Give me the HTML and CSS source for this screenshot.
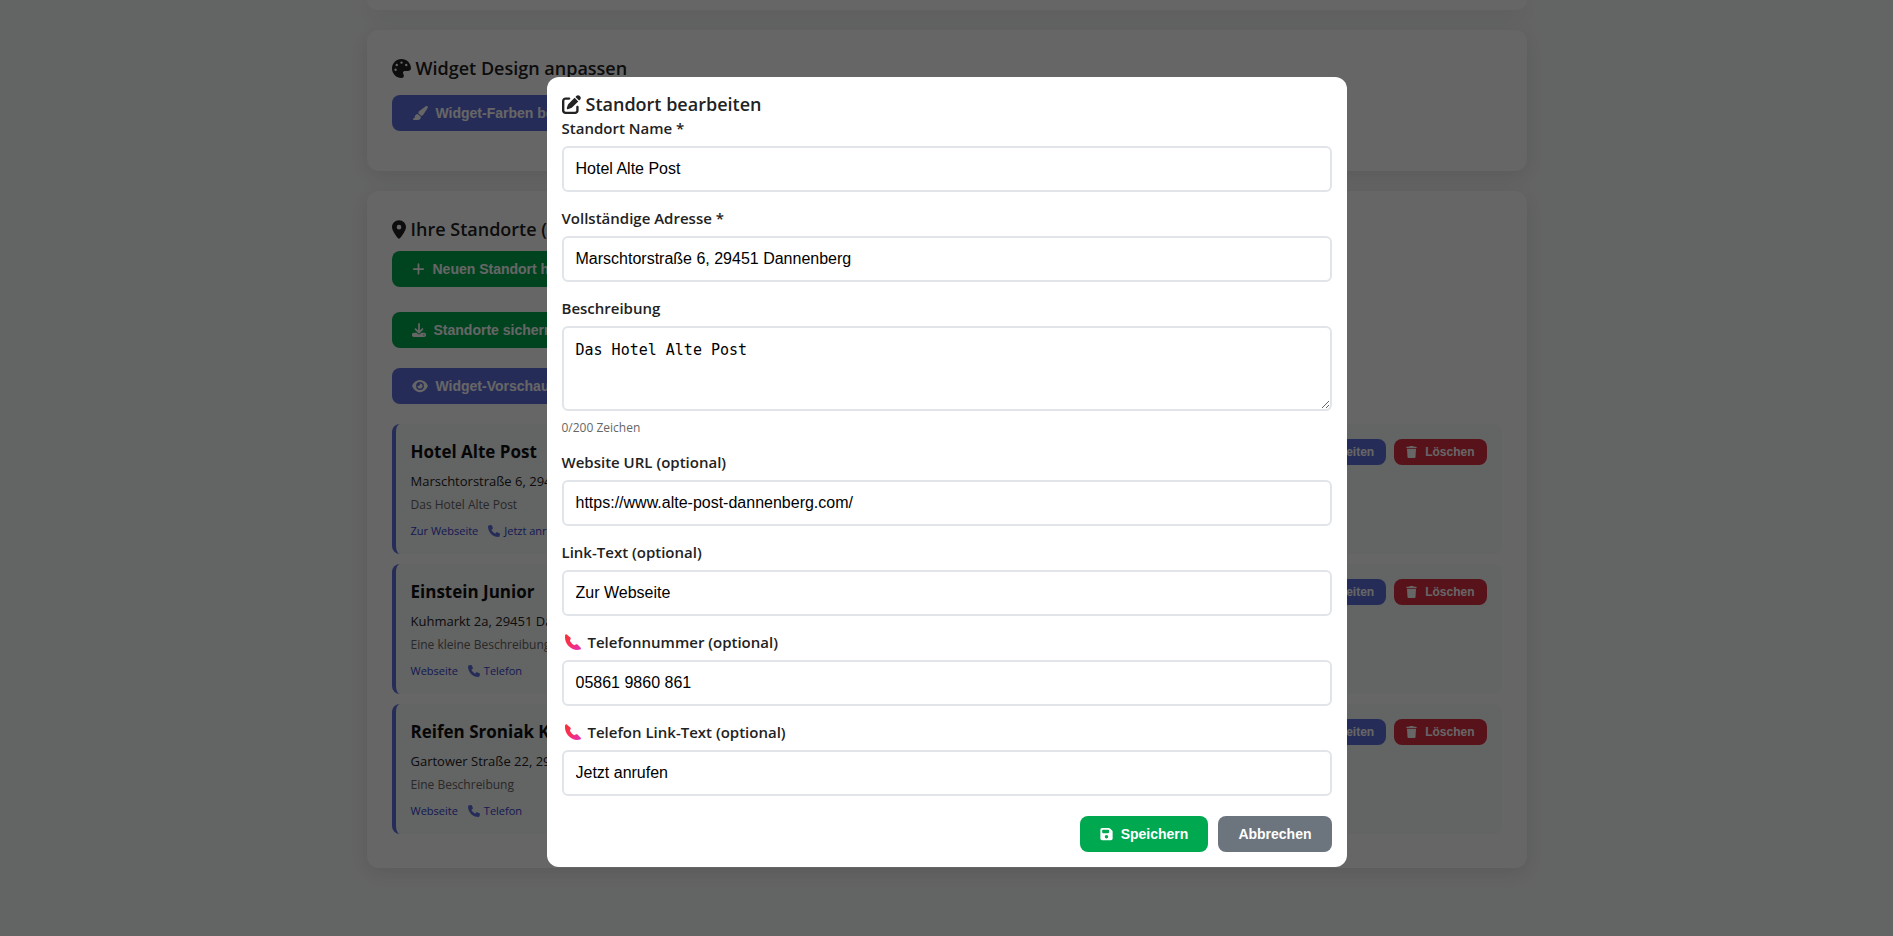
FILE: index.html
```
<!DOCTYPE html>
<html lang="de">
<head>
  <meta charset="UTF-8">
  <meta name="viewport" content="width=device-width, initial-scale=1.0">
  <title>Standorte verwalten</title>
  <link rel="stylesheet" href="styles.css">
</head>
<body>
  <!-- Icons -->
  <svg class="icon-defs" aria-hidden="true">
    <defs>
      <linearGradient id="pink" x1="0" y1="0" x2="1" y2="1">
        <stop offset="0" stop-color="#f8312f"/>
        <stop offset="0.5" stop-color="#f92f60"/>
        <stop offset="1" stop-color="#e02fc0"/>
      </linearGradient>
    </defs>
    <symbol id="i-palette" viewBox="0 0 512 512"><path fill-rule="evenodd" d="M512 256c0 .9 0 1.800 0 2.700c-.4 36.500-33.600 61.300-70.100 61.300H344c-26.500 0-48 21.500-48 48c0 3.400 .4 6.700 1 9.900c2.100 10.200 6.500 20 10.800 29.900c6.100 13.800 12.100 27.500 12.100 42c0 31.800-21.600 60.700-53.400 62c-3.500 .1-7 .2-10.600 .2C114.600 512 0 397.400 0 256S114.600 0 256 0S512 114.600 512 256zM128 288a32 32 0 1 0-64 0a32 32 0 1 0 64 0zm0-96a32 32 0 1 0 0-64a32 32 0 1 0 0 64zM288 96a32 32 0 1 0-64 0a32 32 0 1 0 64 0zm96 96a32 32 0 1 0 0-64a32 32 0 1 0 0 64z"/></symbol>
    <symbol id="i-brush" viewBox="0 0 576 512"><path d="M339.300 367.100c27.300-3.900 51.900-19.400 67.200-42.900L568.200 74.100c12.600-19.500 9.400-45.300-7.600-61.200S517.700-4.400 499.100 9.600L262.400 187.200c-24 18-38.200 46.100-38.400 76.100l115.300 103.800zm-19.600 25.400l-116-104.400C143.900 290.300 96 339.600 96 400c0 3.900 .2 7.800 .6 11.600C98.400 429.100 86.400 448 68.800 448H64c-17.700 0-32 14.300-32 32s14.300 32 32 32H208c61.900 0 112-50.100 112-112c0-2.500-.1-5-.2-7.500z"/></symbol>
    <symbol id="i-pin" viewBox="0 0 384 512"><path fill-rule="evenodd" d="M215.700 499.200C267 435 384 279.400 384 192C384 86 298 0 192 0S0 86 0 192c0 87.400 117 243 168.300 307.200c12.300 15.300 35.100 15.300 47.400 0zM192 128a64 64 0 1 1 0 128a64 64 0 1 1 0-128z"/></symbol>
    <symbol id="i-plus" viewBox="0 0 448 512"><path d="M256 80c0-17.700-14.300-32-32-32s-32 14.300-32 32V224H48c-17.700 0-32 14.300-32 32s14.300 32 32 32H192V432c0 17.700 14.300 32 32 32s32-14.300 32-32V288H400c17.700 0 32-14.300 32-32s-14.300-32-32-32H256V80z"/></symbol>
    <symbol id="i-download" viewBox="0 0 512 512"><path fill-rule="evenodd" d="M288 32c0-17.700-14.300-32-32-32s-32 14.300-32 32V274.700l-73.400-73.400c-12.500-12.500-32.800-12.500-45.300 0s-12.500 32.800 0 45.300l128 128c12.500 12.500 32.800 12.500 45.300 0l128-128c12.500-12.500 12.500-32.800 0-45.300s-32.800-12.500-45.300 0L288 274.700V32zM64 352c-35.300 0-64 28.700-64 64v32c0 35.300 28.700 64 64 64H448c35.300 0 64-28.700 64-64V416c0-35.300-28.700-64-64-64H346.500l-45.300 45.300c-25 25-65.500 25-90.500 0L165.500 352H64zm368 56a24 24 0 1 1 0 48a24 24 0 1 1 0-48z"/></symbol>
    <symbol id="i-eye" viewBox="0 0 576 512"><path fill-rule="evenodd" d="M288 32c-80.800 0-145.500 36.800-192.600 80.600C48.600 156 17.300 208 2.500 243.700c-3.300 7.900-3.300 16.700 0 24.600C17.300 304 48.600 356 95.400 399.400C142.500 443.200 207.200 480 288 480s145.500-36.800 192.600-80.600c46.800-43.500 78.100-95.400 93-131.100c3.300-7.900 3.300-16.700 0-24.600c-14.900-35.700-46.200-87.700-93-131.100C433.500 68.800 368.800 32 288 32zM144 256a144 144 0 1 1 288 0a144 144 0 1 1-288 0zm144-64c0 35.300-28.700 64-64 64c-7.100 0-13.900-1.200-20.300-3.300c-5.500-1.800-11.900 1.600-11.700 7.400c.3 6.900 1.300 13.800 3.200 20.700c13.700 51.200 66.400 81.600 117.600 67.900s81.600-66.400 67.900-117.600c-11.100-41.500-47.800-69.400-88.600-71.100c-5.800-.2-9.200 6.100-7.400 11.700c2.100 6.400 3.300 13.200 3.300 20.300z"/></symbol>
    <symbol id="i-phone" viewBox="0 0 512 512"><path d="M164.900 24.600c-7.700-18.600-28-28.500-47.400-23.200l-88 24C12.100 30.200 0 46 0 64C0 311.400 200.600 512 448 512c18 0 33.800-12.100 38.600-29.500l24-88c5.300-19.400-4.600-39.700-23.200-47.400l-96-40c-16.300-6.800-35.200-2.100-46.300 11.600L304.700 368C234.300 334.700 177.300 277.700 144 207.300L193.300 167c13.700-11.200 18.400-30 11.600-46.300l-40-96z"/></symbol>
    <symbol id="i-edit" viewBox="0 0 512 512"><path d="M471.600 21.700c-21.900-21.900-57.300-21.900-79.200 0L362.300 51.700l97.900 97.900 30.100-30.100c21.900-21.900 21.900-57.300 0-79.200L471.600 21.700zm-299.200 220c-6.100 6.100-10.800 13.600-13.500 21.900l-29.600 88.800c-2.900 8.600-.6 18.100 5.800 24.600s15.900 8.700 24.600 5.800l88.800-29.600c8.200-2.700 15.700-7.400 21.900-13.500L437.700 172.300 339.700 74.300 172.400 241.700zM96 64C43 64 0 107 0 160V416c0 53 43 96 96 96H352c53 0 96-43 96-96V320c0-17.700-14.300-32-32-32s-32 14.300-32 32v96c0 17.700-14.300 32-32 32H96c-17.700 0-32-14.300-32-32V160c0-17.700 14.300-32 32-32h96c17.700 0 32-14.300 32-32s-14.300-32-32-32H96z"/></symbol>
    <symbol id="i-trash" viewBox="0 0 448 512"><path d="M135.200 17.700L128 32H32C14.300 32 0 46.300 0 64S14.300 96 32 96H416c17.700 0 32-14.300 32-32s-14.300-32-32-32H320l-7.200-14.300C307.400 6.800 296.300 0 284.200 0H163.800c-12.100 0-23.200 6.800-28.600 17.700zM416 128H32L53.200 467c1.600 25.300 22.600 45 47.900 45H346.900c25.300 0 46.300-19.700 47.900-45L416 128z"/></symbol>
    <symbol id="i-save" viewBox="0 0 448 512"><path fill-rule="evenodd" d="M64 32C28.700 32 0 60.700 0 96V416c0 35.300 28.700 64 64 64H384c35.300 0 64-28.700 64-64V173.300c0-17-6.700-33.300-18.700-45.300L352 50.700C340 38.700 323.700 32 306.700 32H64zm0 96c0-17.700 14.300-32 32-32H288c17.700 0 32 14.300 32 32v64c0 17.700-14.300 32-32 32H96c-17.700 0-32-14.300-32-32V128zM224 288a64 64 0 1 1 0 128a64 64 0 1 1 0-128z"/></symbol>
    <symbol id="i-receiver" viewBox="0 0 16 16"><path fill="url(#pink)" d="M.2 1C.4.300 1.200 0 1.800.4L5.300 3.600C5.900 4.200 5.900 4.900 5.400 5.500L4.900 6.500C5.200 8 8 10.800 9.500 11.200L10.600 10.600C11.200 10.100 11.900 10.100 12.500 10.600L15.700 13.700C16.200 14.400 15.900 15.200 15.100 15.500C11.500 16.600 7 15.600 3.800 12.300C.6 9-.5 4.800 .2 1Z"/></symbol>
  </svg>

  <div class="container">
    <div class="card card-prev"></div>

    <div class="card">
      <h2><svg class="icon"><use href="#i-palette"/></svg> Widget Design anpassen</h2>
      <div class="btn-row">
        <button class="btn btn-primary"><svg class="icon wide"><use href="#i-brush"/></svg>Widget-Farben bearbeiten</button>
      </div>
    </div>

    <div class="card">
      <h2 class="tight"><svg class="icon narrow"><use href="#i-pin"/></svg> Ihre Standorte (3)</h2>
      <div class="btn-row first">
        <button class="btn btn-success"><svg class="icon narrow"><use href="#i-plus"/></svg>Neuen Standort hinzufügen</button>
      </div>
      <div class="btn-row spaced">
        <button class="btn btn-success"><svg class="icon"><use href="#i-download"/></svg>Standorte sichern</button>
      </div>
      <div class="btn-row spaced">
        <button class="btn btn-primary"><svg class="icon wide"><use href="#i-eye"/></svg>Widget-Vorschau</button>
      </div>

      <div class="locations">
        <div class="location">
          <div class="location-info">
            <h3>Hotel Alte Post</h3>
            <p class="address">Marschtorstraße 6, 29451 Dannenberg</p>
            <p class="description">Das Hotel Alte Post</p>
            <div class="links">
              <a href="#">Zur Webseite</a>
              <a href="#"><svg class="icon"><use href="#i-phone"/></svg> Jetzt anrufen</a>
            </div>
          </div>
          <div class="actions">
            <button class="btn btn-small btn-primary"><svg class="icon"><use href="#i-edit"/></svg>Bearbeiten</button>
            <button class="btn btn-small btn-danger"><svg class="icon narrow"><use href="#i-trash"/></svg>Löschen</button>
          </div>
        </div>

        <div class="location">
          <div class="location-info">
            <h3>Einstein Junior</h3>
            <p class="address">Kuhmarkt 2a, 29451 Dannenberg</p>
            <p class="description">Eine kleine Beschreibung</p>
            <div class="links">
              <a href="#">Webseite</a>
              <a href="#"><svg class="icon"><use href="#i-phone"/></svg> Telefon</a>
            </div>
          </div>
          <div class="actions">
            <button class="btn btn-small btn-primary"><svg class="icon"><use href="#i-edit"/></svg>Bearbeiten</button>
            <button class="btn btn-small btn-danger"><svg class="icon narrow"><use href="#i-trash"/></svg>Löschen</button>
          </div>
        </div>

        <div class="location">
          <div class="location-info">
            <h3>Reifen Sroniak KG</h3>
            <p class="address">Gartower Straße 22, 29451 Dannenberg</p>
            <p class="description">Eine Beschreibung</p>
            <div class="links">
              <a href="#">Webseite</a>
              <a href="#"><svg class="icon"><use href="#i-phone"/></svg> Telefon</a>
            </div>
          </div>
          <div class="actions">
            <button class="btn btn-small btn-primary"><svg class="icon"><use href="#i-edit"/></svg>Bearbeiten</button>
            <button class="btn btn-small btn-danger"><svg class="icon narrow"><use href="#i-trash"/></svg>Löschen</button>
          </div>
        </div>
      </div>
    </div>
  </div>

  <div class="modal-overlay">
    <form class="modal" role="dialog" aria-labelledby="modalTitle">
      <h2 id="modalTitle"><svg class="icon"><use href="#i-edit"/></svg> Standort bearbeiten</h2>
      <div class="form-group">
        <label for="name">Standort Name *</label>
        <input type="text" id="name" value="Hotel Alte Post">
      </div>
      <div class="form-group">
        <label for="address">Vollständige Adresse *</label>
        <input type="text" id="address" value="Marschtorstraße 6, 29451 Dannenberg">
      </div>
      <div class="form-group">
        <label for="description">Beschreibung</label>
        <textarea id="description" maxlength="200">Das Hotel Alte Post</textarea>
        <div class="char-count">0/200 Zeichen</div>
      </div>
      <div class="form-group">
        <label for="website">Website URL (optional)</label>
        <input type="text" id="website" value="https://www.alte-post-dannenberg.com/">
      </div>
      <div class="form-group">
        <label for="linkText">Link-Text (optional)</label>
        <input type="text" id="linkText" value="Zur Webseite">
      </div>
      <div class="form-group">
        <label for="phone"><svg class="receiver"><use href="#i-receiver"/></svg>Telefonnummer (optional)</label>
        <input type="text" id="phone" value="05861 9860 861">
      </div>
      <div class="form-group">
        <label for="phoneText"><svg class="receiver"><use href="#i-receiver"/></svg>Telefon Link-Text (optional)</label>
        <input type="text" id="phoneText" value="Jetzt anrufen">
      </div>
      <div class="modal-actions">
        <button type="button" class="btn btn-success"><svg class="icon narrow"><use href="#i-save"/></svg>Speichern</button>
        <button type="button" class="btn btn-secondary">Abbrechen</button>
      </div>
    </form>
  </div>
</body>
</html>
```
FILE: styles.css
```
:root {
  --primary: #5f6fdc;
  --success: #00a84f;
  --danger: #dc2d42;
  --secondary: #6c757d;
  --text: #222;
  --light: #f8faf9;
  --border: #e1e5e9;
}
* { margin: 0; padding: 0; box-sizing: border-box; }
body {
  font-family: "Segoe UI", "Open Sans", sans-serif;
  background: var(--light);
  color: var(--text);
  overflow: hidden;
}
.icon-defs { position: absolute; width: 0; height: 0; }
.icon { width: 14px; height: 14px; fill: currentColor; flex: none; }
.icon.wide { width: 16px; }
.icon.narrow { width: 13px; }

.container { max-width: 1160px; margin: 0 auto; }
.card {
  background: white;
  border-radius: 12px;
  padding: 25px;
  margin-bottom: 20px;
  box-shadow: 0 5px 20px rgba(0,0,0,0.1);
}
.card-prev { height: 10px; padding: 0; border-radius: 0 0 12px 12px; }

h2 { display: flex; align-items: center; gap: 5px; font-size: 18px; font-weight: 600; line-height: 26px; }
h2 .icon { width: 19px; height: 19px; }
h2 .icon.narrow { width: 14px; }
.card h2 { margin-bottom: 14px; }
.card h2.tight { margin-bottom: 9px; }

.btn {
  display: inline-flex; align-items: center; gap: 8px;
  height: 36px; padding: 0 20px;
  border: none; border-radius: 8px;
  font-family: "Liberation Sans", Arial, sans-serif;
  font-size: 14px; font-weight: 700;
  color: white; cursor: pointer;
}
.btn-primary { background: var(--primary); }
.btn-success { background: var(--success); }
.btn-danger { background: var(--danger); }
.btn-secondary { background: var(--secondary); }
.btn-small { height: 26px; padding: 0 12px; font-size: 12px; }
.btn-small .icon { width: 12px; height: 12px; }
.btn-small .icon.narrow { width: 11px; }
.btn-row { display: flex; margin-bottom: 15px; }
.btn-row.first { margin-bottom: 25px; }
.btn-row.spaced { margin-bottom: 20px; }

/* Location list */
.locations { display: flex; flex-direction: column; gap: 10px; margin-bottom: 9px; }
.location {
  display: flex; justify-content: space-between; align-items: flex-start;
  padding: 15px;
  background: var(--light);
  border-left: 4px solid var(--primary);
  border-radius: 8px;
}
.location h3 { font-size: 17px; line-height: 26px; margin-bottom: 4px; color: #111; }
.address { font-size: 13px; line-height: 24px; }
.description { font-size: 12px; line-height: 24px; color: #666; }
.links { display: flex; gap: 10px; margin-top: 6px; font-size: 11px; line-height: 16px; }
.links a { display: flex; align-items: center; gap: 4px; color: #3540d0; text-decoration: none; }
.links .icon { width: 12px; height: 12px; fill: var(--primary); }
.actions { display: flex; gap: 8px; }

/* Modal */
.modal-overlay {
  position: fixed; inset: 0;
  display: flex; justify-content: center; align-items: flex-start;
  padding-top: 77px;
  background: rgba(0,0,0,0.6);
}
.modal { width: 100%; max-width: 800px; padding: 16px 15px 15px; background: white; border-radius: 12px; }
.modal h2 { line-height: 23px; }
.form-group { margin-bottom: 14px; }
label { display: flex; align-items: center; margin-bottom: 6px; font-size: 15px; font-weight: 600; line-height: 24px; }
.receiver { width: 16px; height: 16px; margin: 0 7px 0 3px; }
input, textarea {
  display: block; width: 100%; height: 46px;
  padding: 12px;
  border: 2px solid var(--border); border-radius: 6px;
  font-family: "Liberation Sans", Arial, sans-serif; font-size: 16px;
  color: black; background: white;
}
textarea { height: 85px; padding-top: 13px; font-family: Consolas, "DejaVu Sans Mono", monospace; font-size: 15px; resize: vertical; }
.char-count { margin-top: 8px; font-size: 12px; line-height: 17px; color: #666; }
.modal-actions { display: flex; justify-content: flex-end; gap: 10px; margin-top: 20px; }
```
